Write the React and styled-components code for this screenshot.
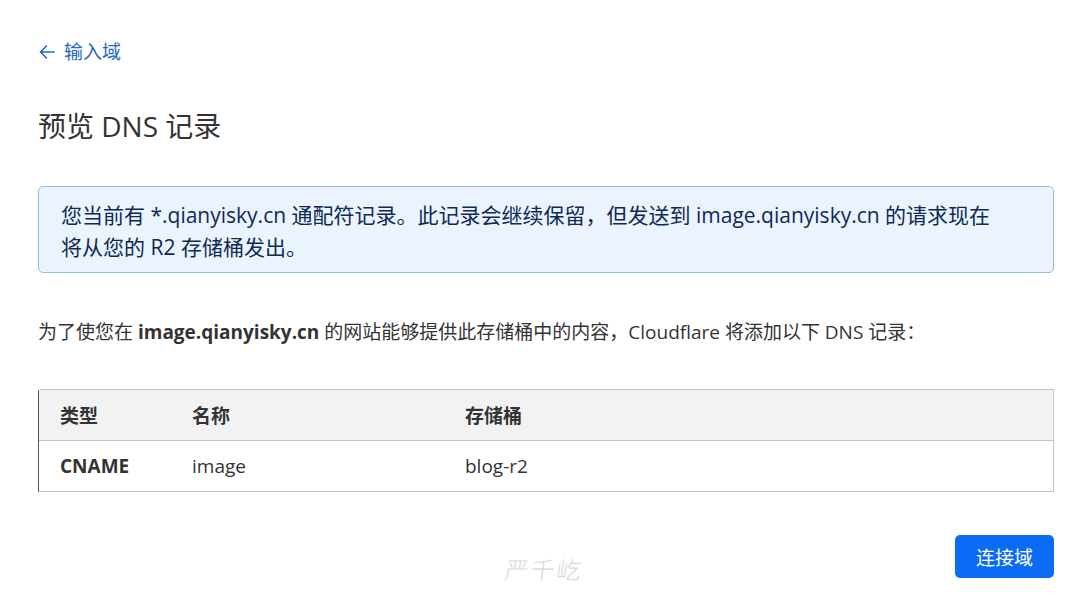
import React from "react";
import styled, { createGlobalStyle } from "styled-components";

const Global = createGlobalStyle`
  html, body { margin: 0; padding: 0; background: #fff; }
  body { font-family: "Open Sans", "Noto Sans CJK SC", sans-serif; color: #333; min-height: 615px; }
`;

const Page = styled.div`
  padding: 40px 28px 37px 38px;
  display: flex;
  flex-direction: column;
`;

const BackLink = styled.a`
  display: inline-flex;
  align-items: center;
  gap: 8px;
  color: #1f68bd;
  font-size: 19px;
  line-height: 24px;
  text-decoration: none;
  align-self: flex-start;
`;

const Title = styled.h1`
  margin: 44px 0 0;
  font-size: 28px;
  line-height: 36px;
  font-weight: 400;
  color: #333;
`;

const Alert = styled.div`
  margin-top: 42px;
  background: #ebf3fe;
  border: 1px solid #94bfe6;
  border-radius: 5px;
  padding: 12px 48px 9px 22px;
  font-size: 21px;
  line-height: 32px;
  color: #0d2b55;
`;

const Para = styled.p`
  margin: 46px 0 0;
  font-size: 19px;
  line-height: 26px;
  color: #333;
  b { font-weight: 700; }
`;

const Table = styled.div`
  margin-top: 44px;
  border: 1px solid #c4c4c4;
  border-left-color: #555;
  border-radius: 3px 0 0 0;
`;

const Row = styled.div`
  display: grid;
  grid-template-columns: 132px 273px 1fr;
  height: 50px;
  align-items: center;
  padding-left: 21px;
  font-size: 19px;
  background: ${p => (p.$head ? "#f2f2f2" : "#fff")};
  font-weight: ${p => (p.$head ? 700 : 400)};
  border-bottom: ${p => (p.$head ? "1px solid #c4c4c4" : "none")};
  color: #333;
`;

const Cell = styled.div`
  font-weight: ${p => (p.$bold ? 700 : "inherit")};
`;

const Footer = styled.div`
  margin-top: 43px;
  display: flex;
  justify-content: flex-end;
  align-items: center;
  position: relative;
`;

const Watermark = styled.span`
  position: absolute;
  left: 467px;
  top: 19px;
  font-size: 24px;
  line-height: 30px;
  letter-spacing: 2px;
  color: #d8d8d8;
  font-weight: 300;
  font-family: "Noto Sans CJK SC", sans-serif;
  transform: skewX(-8deg);
`;

const Button = styled.button`
  height: 43px;
  width: 99px;
  border: none;
  border-radius: 5px;
  background: #0a6cf5;
  color: #fff;
  font-size: 19px;
  font-family: inherit;
  cursor: pointer;
`;

const Arrow = () => (
  <svg width="18" height="18" viewBox="0 0 18 18" fill="none" stroke="#1f68bd" strokeWidth="1.6" strokeLinecap="round" strokeLinejoin="round">
    <path d="M16 9H2.5M8.5 3L2.5 9l6 6" />
  </svg>
);

export default function App() {
  return (
    <>
      <Global />
      <Page>
        <BackLink href="#">
          <Arrow />
          输入域
        </BackLink>
        <Title>预览 DNS 记录</Title>
        <Alert>
          您当前有 *.qianyisky.cn 通配符记录。此记录会继续保留，但发送到 image.qianyisky.cn 的请求现在将从您的 R2 存储桶发出。
        </Alert>
        <Para>
          为了使您在 <b>image.qianyisky.cn</b> 的网站能够提供此存储桶中的内容，Cloudflare 将添加以下 DNS 记录：
        </Para>
        <Table>
          <Row $head>
            <Cell>类型</Cell>
            <Cell>名称</Cell>
            <Cell>存储桶</Cell>
          </Row>
          <Row>
            <Cell $bold>CNAME</Cell>
            <Cell>image</Cell>
            <Cell>blog-r2</Cell>
          </Row>
        </Table>
        <Footer>
          <Watermark>严千屹</Watermark>
          <Button>连接域</Button>
        </Footer>
      </Page>
    </>
  );
}
